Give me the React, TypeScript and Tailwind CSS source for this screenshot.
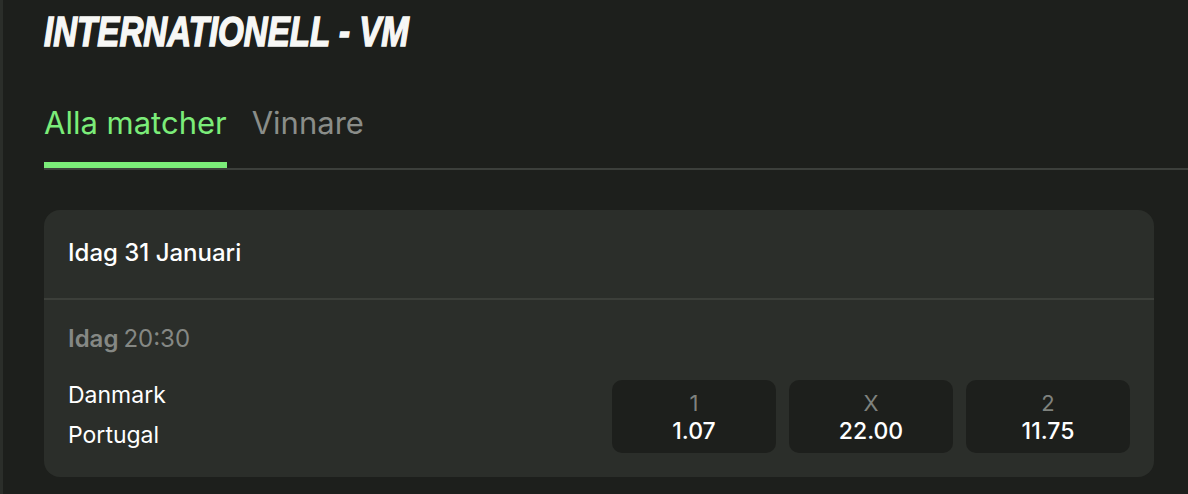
const odds = [
  { label: "1", value: "1.07" },
  { label: "X", value: "22.00" },
  { label: "2", value: "11.75" },
];

export default function App() {
  return (
    <div className="flex h-[494px] w-full overflow-hidden bg-[#1d1f1c] font-['Inter',sans-serif]">
      <div className="w-[3px] shrink-0 bg-[#2b2e2a]" />
      <main className="flex flex-1 flex-col pl-[41px]">
        <h1 className="origin-left scale-x-[0.77] pt-[10px] font-['Liberation_Sans',sans-serif] text-[43px] leading-[43px] font-bold italic text-[#f7f7f5] [-webkit-text-stroke:1.5px_#f7f7f5]">
          INTERNATIONELL - VM
        </h1>

        <nav className="mt-[51px] flex gap-[25px] border-b-2 border-[#3c3f3b]">
          <button className="border-b-[6px] border-[#7bec79] pb-[20px] text-[31px] leading-[38px] text-[#7bec79]">
            Alla matcher
          </button>
          <button className="pb-[26px] text-[31px] leading-[38px] text-[#8a8d89]">Vinnare</button>
        </nav>

        <section className="mt-[40px] mr-[34px] rounded-2xl bg-[#2b2e2a]">
          <div className="border-b-2 border-[#3c3f3a] px-6 pt-[27px] pb-[29px] text-2xl leading-8 font-medium text-white">
            Idag 31 Januari
          </div>
          <div className="px-6 pt-[23px] pb-[22px]">
            <div className="flex gap-[5px] text-2xl leading-8 text-[#858884]">
              <span className="font-semibold">Idag</span>
              <span>20:30</span>
            </div>
            <div className="mt-[20px] flex items-start justify-between">
              <div className="flex flex-col text-[23px] leading-[40px] text-white">
                <span>Danmark</span>
                <span>Portugal</span>
              </div>
              <div className="mt-[5px] flex gap-[13px]">
                {odds.map((o) => (
                  <button
                    key={o.label}
                    className="flex h-[73px] w-[164px] flex-col items-center justify-center gap-1 rounded-[10px] bg-[#1d1f1c]"
                  >
                    <span className="text-[22px] leading-6 text-[#7f827e]">{o.label}</span>
                    <span className="text-[23px] leading-6 font-medium text-white">{o.value}</span>
                  </button>
                ))}
              </div>
            </div>
          </div>
        </section>
      </main>
    </div>
  );
}
